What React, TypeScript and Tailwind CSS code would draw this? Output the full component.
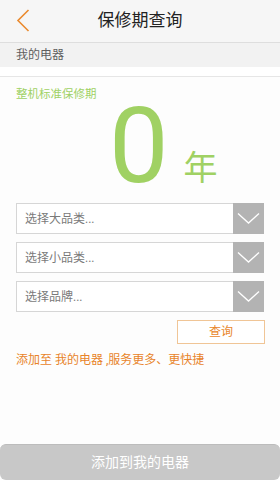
import React from "react";

const font = { fontFamily: '"Roboto", "Noto Sans CJK SC", sans-serif' };

function Chevron() {
    return (
        <svg width="31" height="31" viewBox="0 0 31 31" fill="none">
            <path d="M5 10.5 L15.5 20 L26 10.5" stroke="#ffffff" strokeWidth="1.3" />
        </svg>
    );
}

function SelectRow({ label }: { label: string }) {
    return (
        <div className="flex h-[31px] border border-[#d6d6d6] bg-white">
            <div className="flex-1 flex items-center pl-[8px] text-[12px] text-[#7a7a7a]">{label}</div>
            <div className="w-[31px] bg-[#b3b3b3] flex items-center justify-center -my-px -mr-px h-[31px]">
                <Chevron />
            </div>
        </div>
    );
}

export default function App() {
    return (
        <div className="w-[280px] h-[480px] flex flex-col bg-[#fdfdfd] overflow-hidden" style={font}>
            <div className="relative h-[43px] shrink-0 bg-[#f6f6f6] border-b border-[#dedede] flex items-center justify-center">
                <svg className="absolute left-[16px] top-[9px]" width="14" height="23" viewBox="0 0 14 23" fill="none">
                    <path d="M12.5 1 L2 11.5 L12.5 22" stroke="#ea8a2e" strokeWidth="1.6" />
                </svg>
                <span className="text-[17px] text-[#222]">保修期查询</span>
            </div>
            <div className="h-[24px] shrink-0 bg-[#f2f2f2] flex items-center pl-[16px] text-[12px] text-[#5f5f5f]">我的电器</div>
            <div className="h-[10px] shrink-0 border-b border-[#e6e6e6] bg-white"></div>

            <div className="flex-1 flex flex-col px-[16px]">
                <div className="mt-[10px] text-[11.5px] leading-[14px] text-[#9fd164]">整机标准保修期</div>
                <div className="h-[98px] flex items-end">
                    <span className="text-[106px] leading-[100px] font-normal text-[#a0d163] ml-[93px] mb-[3px]">0</span>
                    <span className="text-[34px] leading-[40px] text-[#a0d163] ml-[15px] mb-[11px]">年</span>
                </div>
                <div className="flex flex-col gap-[8px] mt-[4px]">
                    <SelectRow label="选择大品类..." />
                    <SelectRow label="选择小品类..." />
                    <SelectRow label="选择品牌..." />
                </div>
                <div className="flex justify-end mt-[8px]">
                    <button className="w-[88px] h-[24px] border border-[#f0c596] text-[12px] text-[#e8862a] bg-white mr-[-1px]">查询</button>
                </div>
                <div className="mt-[7px] text-[12px] text-[#e8842a]">添加至 我的电器 ,服务更多、更快捷</div>
            </div>

            <div className="h-[36px] shrink-0 bg-[#c8c8c8] border-t border-[#bcbcbc] rounded-[6px] flex items-center justify-center text-[14px] text-white">
                添加到我的电器
            </div>
        </div>
    );
}
